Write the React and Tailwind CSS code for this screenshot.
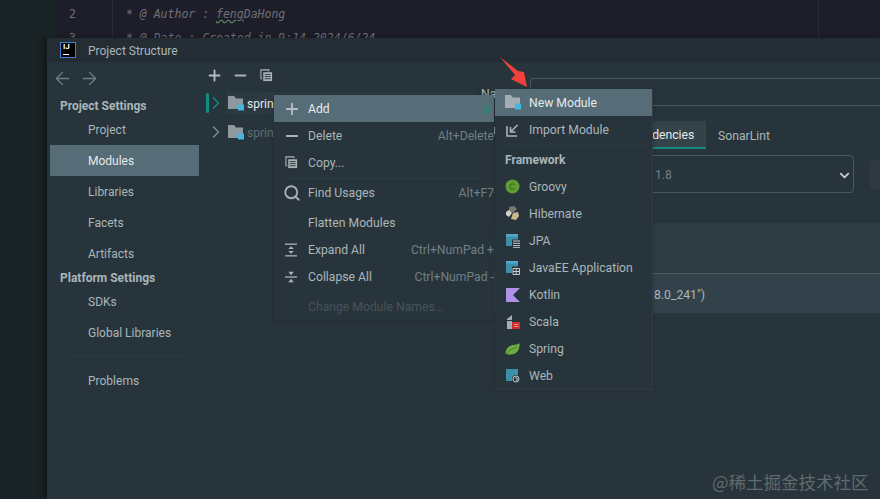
import React from "react";
import { Plus, Minus, Search, ChevronDown, ArrowLeft, ArrowRight, ChevronRight } from "lucide-react";

const CopyIcon = ({ className }) => (
  <svg viewBox="0 0 14 14" className={className} fill="none" stroke="#a9b4b8" strokeWidth="1.2">
    <path d="M2.500 10.500H1V1h8.500v1.500" />
    <rect x="3.5" y="3.5" width="9.5" height="9.5" fill="#a9b4b8" stroke="none" />
    <path d="M5 6h6.500M5 8.200h6.500M5 10.500h6.500" stroke="#28343b" strokeWidth="1" />
  </svg>
);

const FolderIcon = ({ light }) => (
  <svg viewBox="0 0 16 15" className="w-4 h-[15px] shrink-0">
    <path d="M0 0h6l2 2.500h7V13H0z" fill={light ? "#a4aeb2" : "#8d999e"} />
    <rect x="10" y="8.5" width="6" height="6" fill="#45b6dc" />
  </svg>
);

const ExpandIcon = () => (
  <svg viewBox="0 0 14 14" className="w-[13px] h-[14px]" fill="#a9b4b8">
    <rect x="0" y="0" width="13" height="1.4" />
    <rect x="0" y="12.6" width="13" height="1.4" />
    <path d="M6.500 3l3 3h-6zM6.500 11l-3-3h6z" />
  </svg>
);

const CollapseIcon = () => (
  <svg viewBox="0 0 14 14" className="w-[13px] h-[14px]" fill="#a9b4b8">
    <rect x="0" y="6.3" width="13" height="1.4" />
    <path d="M6.500 5l-3-3.600h6zM6.500 9l3 3.600h-6z" />
  </svg>
);

const ImportIcon = () => (
  <svg viewBox="0 0 14 14" className="w-[14px] h-[14px]" fill="none" stroke="#a9b4b8" strokeWidth="1.6">
    <path d="M1 3v10h10" />
    <path d="M11.500 2L5 8.500M4.500 4v5h5" />
  </svg>
);

const GroovyIcon = () => (
  <svg viewBox="0 0 15 15" className="w-[15px] h-[15px]">
    <circle cx="7.5" cy="7.5" r="7" fill="#5e9c34" />
    <path d="M9.500 6a2.600 2.600 0 1 0 0 3" fill="none" stroke="#3f6f22" strokeWidth="1.2" />
  </svg>
);

const HibernateIcon = () => (
  <svg viewBox="0 0 15 15" className="w-[15px] h-[15px]">
    <path d="M4 1l5-1 3 3-4 4-4-2z" fill="#77776e" />
    <path d="M1 6l3-2 3 3-3 4-3-2z" fill="#d4d2c6" />
    <path d="M8 7l5-1 1 4-3 4-5-1z" fill="#cbb98c" />
  </svg>
);

const SheetIcon = ({ kind }) => (
  <svg viewBox="0 0 14 14" className="w-[14px] h-[14px]">
    <path d="M0 0h12v12H0z" fill="#3b8fa8" />
    <rect x="0" y="0" width="12" height="2.5" fill="#55a8c4" />
    <rect x="6" y="5.5" width="8" height="8.5" fill="#28343b" />
    {kind === "list" ? (
      <path d="M7 7h7M7 9.300h7M7 11.600h7M7 13.700h7" stroke="#c2cace" strokeWidth="1" />
    ) : (
      <path d="M7 7.500h6.500v6H7zM10.200 7.500v6M7 10.500h6.500" stroke="#c2cace" strokeWidth="1" fill="none" />
    )}
  </svg>
);

const KotlinIcon = () => (
  <svg viewBox="0 0 14 14" className="w-[14px] h-[14px]">
    <path d="M0 0h14L7 7l7 7H0z" fill="#b091e8" />
  </svg>
);

const ScalaIcon = () => (
  <svg viewBox="0 0 14 15" className="w-[14px] h-[15px]">
    <path d="M1 5l5-4v5H1zM1 7h5v8H1z" fill="#a4aeb2" />
    <rect x="6" y="8" width="8" height="7" fill="#d12a2a" />
    <path d="M8 10.500h4.500M8 12.500h4.500" stroke="#f2a0a0" strokeWidth="0.8" />
  </svg>
);

const SpringIcon = () => (
  <svg viewBox="0 0 15 12" className="w-[15px] h-[12px]">
    <path d="M14.500 0c-1 1-2 1.400-5 1.800C4 2.500 1 5 .3 10.500 2 12 7 12 10 10.500 13.500 9 15 4 14.500 0z" fill="#6cad3f" />
    <path d="M1 11C4 7 8 5.500 12 4" stroke="#3f7526" strokeWidth="0.8" fill="none" />
  </svg>
);

const WebIcon = () => (
  <svg viewBox="0 0 14 14" className="w-[14px] h-[14px]">
    <path d="M0 0h12v12H0z" fill="#3b8fa8" />
    <circle cx="10" cy="10" r="4" fill="#28343b" />
    <circle cx="10" cy="10" r="3" fill="none" stroke="#c2cace" strokeWidth="1" />
    <path d="M9 8.500l2.500 1-1 2.500" stroke="#c2cace" strokeWidth="1" fill="none" />
  </svg>
);

const sideTop = ["Project", "Modules", "Libraries", "Facets", "Artifacts"];
const sideBottom = ["SDKs", "Global Libraries"];

const SideItem = ({ label, active }) => (
  <div className={`h-[31px] flex items-center pl-[38px] ml-[3px] w-[149px] text-[12px] ${active ? "bg-[#566c76] text-[#e4eaec]" : "text-[#a9b6ba]"}`}>
    {label}
  </div>
);

const MenuRow = ({ icon, label, shortcut, active, disabled, className = "" }) => (
  <div className={`h-[27px] flex items-center text-[12.2px] ${active ? "bg-[#566c76] text-[#e4eaec]" : disabled ? "text-[#465359]" : "text-[#a9b6ba]"} ${className}`}>
    <div className="w-[34px] flex justify-center shrink-0 pl-[1px]">{icon}</div>
    <span className="flex-1 whitespace-nowrap pt-[2px]">{label}</span>
    {shortcut && <span className="text-[#6f7f85] whitespace-nowrap pt-[2px]">{shortcut}</span>}
  </div>
);

const frameworks = [
  ["Groovy", <GroovyIcon />],
  ["Hibernate", <HibernateIcon />],
  ["JPA", <SheetIcon kind="list" />],
  ["JavaEE Application", <SheetIcon kind="grid" />],
  ["Kotlin", <KotlinIcon />],
  ["Scala", <ScalaIcon />],
  ["Spring", <SpringIcon />],
  ["Web", <WebIcon />],
];

const ContextMenu = () => (
  <div className="absolute left-[274px] top-[95px] w-[220px] h-[225px] bg-[#28343b] shadow-[0_0_4px_rgba(0,0,0,0.2)]">
    <MenuRow
      active
      icon={<Plus size={18} strokeWidth={2.400} color="#b4bfc3" />}
      label={<span className="flex items-center justify-between">Add<ChevronRight size={15} strokeWidth={3} color="#1f8a7c" /></span>}
    />
    <MenuRow icon={<Minus size={18} strokeWidth={2.600} color="#a9b4b8" />} label="Delete" shortcut="Alt+Delete" />
    <MenuRow icon={<CopyIcon className="w-[13px] h-[13px]" />} label="Copy..." />
    <div className="h-[3px] mx-[10px] border-b border-[#303c43]" />
    <MenuRow icon={<Search size={18} strokeWidth={2.400} color="#a9b4b8" />} label="Find Usages" shortcut="Alt+F7" />
    <div className="h-[3px]" />
    <MenuRow label="Flatten Modules" />
    <MenuRow icon={<ExpandIcon />} label="Expand All" shortcut="Ctrl+NumPad +" />
    <MenuRow icon={<CollapseIcon />} label="Collapse All" shortcut="Ctrl+NumPad -" />
    <div className="h-[3px]" />
    <MenuRow disabled label="Change Module Names..." />
  </div>
);

const AddMenu = () => (
  <div className="absolute left-[495px] top-[89px] w-[158px] h-[301px] bg-[#28343b] border-r border-b border-[#2f3c43] shadow-[0_0_4px_rgba(0,0,0,0.2)]">
    <MenuRow active icon={<FolderIcon light />} label="New Module" />
    <MenuRow icon={<ImportIcon />} label="Import Module" />
    <div className="h-[3px] mx-[5px] border-b border-[#303c43]" />
    <div className="h-[27px] flex items-center pl-[10px] text-[12px] font-bold text-[#a9b6ba]">Framework</div>
    {frameworks.map(([label, icon]) => (
      <MenuRow key={label} icon={icon} label={label} />
    ))}
  </div>
);

const App = () => {
  return (
    <div className="relative w-[880px] h-[499px] overflow-hidden flex flex-col bg-[#1a2326] font-['Roboto',sans-serif]">
      {/* editor behind the dialog */}
      <div className="h-[38px] flex shrink-0 overflow-hidden font-['DejaVu_Sans_Mono',monospace] italic text-[11.5px] text-[#6f7078]">
        <div className="w-[57px] bg-[#1a2326]" />
        <div className="w-[56px] bg-[#1e1e2a] border-r border-[#2a2a36] pl-[12px] not-italic pt-[6px]">
          <div className="h-[24px]">2</div>
          <div>3</div>
        </div>
        <div className="w-[706px] bg-[#1e1e2a] border-r border-[#2a2a36] pl-[13px] pt-[6px] whitespace-nowrap">
          <div className="h-[24px]">
            * @ Author : <span className="underline decoration-wavy decoration-[#5f8f6a]">feng</span>DaHong
          </div>
          <div>* @ Date : Created in 9:14 2024/6/24</div>
        </div>
        <div className="flex-1 bg-[#1e1e2a]" />
      </div>

      {/* dialog */}
      <div className="flex-1 ml-[47px] flex flex-col bg-[#28343b] shadow-[-4px_0_6px_rgba(0,0,0,0.35)]">
        <div className="h-[24px] flex items-center bg-[#232d33] shrink-0 pl-[13px]">
          <div className="relative w-4 h-4 bg-black border border-[#3c7fd0] shrink-0">
            <span className="absolute left-[2px] top-[-2px] text-[8px] leading-[12px] font-bold text-white">IJ</span>
            <span className="absolute left-[2px] bottom-[2px] w-[6px] h-[1px] bg-white" />
          </div>
          <span className="ml-[12px] pt-[2px] text-[12px] text-[#a9b6ba]">Project Structure</span>
        </div>

        <div className="flex-1 flex">
          {/* settings sidebar */}
          <div className="w-[153px] shrink-0">
            <div className="h-[33px] flex items-center gap-[6px] pl-[5px] text-[#6f7d83]">
              <ArrowLeft size={21} strokeWidth={1.600} />
              <ArrowRight size={21} strokeWidth={1.600} />
            </div>
            <div className="h-[17px] mt-[2px] flex items-center pl-[13px] text-[12px] font-bold text-[#a9b6ba]">Project Settings</div>
            {sideTop.map((label) => (
              <SideItem key={label} label={label} active={label === "Modules"} />
            ))}
            <div className="h-[17px] flex items-center pl-[13px] text-[12px] font-bold text-[#a9b6ba]">Platform Settings</div>
            {sideBottom.map((label) => (
              <SideItem key={label} label={label} />
            ))}
            <div className="h-[17px] flex items-center pl-[21px] pr-[15px]">
              <div className="w-full h-px bg-[#303c43]" />
            </div>
            <SideItem label="Problems" />
          </div>

          {/* module tree */}
          <div className="w-[275px] shrink-0 pl-[6px]">
            <div className="h-[26px] flex items-center pt-[1px]">
              <Plus size={17} strokeWidth={2.600} color="#b4bfc3" />
              <Minus size={17} strokeWidth={2.600} color="#a9b4b8" className="ml-[9px]" />
              <CopyIcon className="w-[13px] h-[13px] ml-[11px]" />
            </div>
            <div className="mt-[4px] h-[22px] flex items-center">
              <div className="w-[3px] h-[20px] rounded-sm bg-[#0f8f80]" />
              <ChevronRight size={20} strokeWidth={1.800} color="#138f80" className="ml-[-3px]" />
              <div className="h-full flex-1 flex items-center bg-[#2c3940] pl-[2px] gap-[3px]">
                <FolderIcon />
                <span className="pt-[1px] text-[12px] text-[#e4eaec]">spring-demo</span>
              </div>
            </div>
            <div className="mt-[7px] h-[22px] flex items-center">
              <ChevronRight size={20} strokeWidth={1.800} color="#7c8a90" />
              <div className="flex items-center pl-[2px] gap-[3px]">
                <FolderIcon />
                <span className="pt-[1px] text-[12px] text-[#5d6d74]">spring-demo</span>
              </div>
            </div>
          </div>

          {/* module settings */}
          <div className="flex-1 min-w-0 text-[12.2px] text-[#a9b6ba]">
            <div className="mt-[16px] h-[28px] flex items-center">
              <span className="w-[55px] shrink-0 pl-[6px] pt-[4px]">Name:</span>
              <div className="flex-1 h-full border-t border-b border-l rounded-l border-[#4a585e]" />
            </div>
            <div className="mt-[15px] h-[28px] flex">
              <div className="w-[65px]">Sources</div>
              <div className="w-[66px]">Paths</div>
              <div className="w-[100px] pt-[2px] flex items-center justify-center bg-[#34434a] text-[#e4eaec] border-b-2 border-[#15897a]">
                Dependencies
              </div>
              <div className="pl-[12px] pt-[2px] flex items-center">SonarLint</div>
            </div>
            <div className="mt-[6px] flex items-center">
              <div className="w-[379px] h-[38px] border border-[#4a585e] rounded flex items-center justify-between pl-[179px] pr-[1px] pt-[2px] text-[#6f7f85]">
                <span>1.8</span>
                <ChevronDown size={15} strokeWidth={3} color="#c2cace" />
              </div>
              <div className="ml-[16px] flex-1 h-[29px] rounded-l bg-[#2e3a40]" />
            </div>
            <div className="mt-[30px] h-[50px] bg-[#2f3c42]" />
            <div className="h-[40px] bg-[#33424a] border-t border-[#4a585e] flex items-center pl-[179px] pt-[3px] text-[#a9b6ba]">
              8.0_241")
            </div>
          </div>
        </div>
      </div>

      <ContextMenu />
      <AddMenu />

      {/* red arrow annotation */}
      <svg viewBox="0 0 30 32" className="absolute left-[499px] top-[56px] w-[30px] h-[32px]">
        <path d="M1 1L19 15 25 16 28 31 12 23 16 19z" fill="#f2403c" />
      </svg>

      {/* watermark */}
      <span className="absolute left-[712px] top-[469px] text-[17.5px] whitespace-nowrap text-[#5f696f] font-['Noto_Sans_CJK_SC',sans-serif]">
        @稀土掘金技术社区
      </span>
    </div>
  );
};

export default App;
